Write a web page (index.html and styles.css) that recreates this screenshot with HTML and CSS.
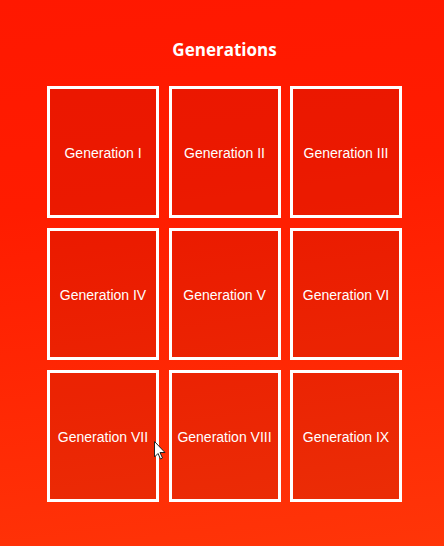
FILE: index.html
```html
<!DOCTYPE html>
<html>
<head>
<meta charset="utf-8">
<link rel="stylesheet" href="styles.css">
</head>
<body>
<main class="page">
  <h1 class="title">Generations</h1>
  <div class="grid">
    <div class="card">Generation I</div>
    <div class="card">Generation II</div>
    <div class="card">Generation III</div>
    <div class="card">Generation IV</div>
    <div class="card">Generation V</div>
    <div class="card">Generation VI</div>
    <div class="card">Generation VII</div>
    <div class="card">Generation VIII</div>
    <div class="card">Generation IX</div>
  </div>
  <svg class="cursor" width="12" height="19" viewBox="0 0 12 19">
    <path d="M0.5 0.5 L0.5 16 L4 12.5 L6.5 18 L8.5 17 L6 11.5 L11 11.5 Z" fill="#fff" stroke="#222" stroke-width="1"/>
  </svg>
</main>
</body>
</html>
```
FILE: styles.css
```css
html, body {
  margin: 0;
  padding: 0;
}
body {
  width: 444px;
  height: 546px;
  overflow: hidden;
  background: linear-gradient(172deg, #ff1800 0%, #ff1c00 35%, #ff3508 100%);
  font-family: "Liberation Sans", Arial, sans-serif;
  color: #fff;
}
.page {
  position: relative;
  box-sizing: border-box;
  height: 546px;
  padding-left: 5px;
  display: flex;
  flex-direction: column;
  align-items: center;
}
.title {
  margin: 38px 0 0;
  height: 48px;
  font-family: "Open Sans", "DejaVu Sans", sans-serif;
  font-weight: 700;
  font-size: 17px;
  line-height: 24px;
}
.grid {
  display: grid;
  grid-template-columns: repeat(3, 112px);
  grid-auto-rows: 132px;
  column-gap: 9.5px;
  row-gap: 10px;
}
.card {
  box-sizing: border-box;
  border: 3px solid #fff;
  background: rgba(60, 0, 0, 0.1);
  display: flex;
  align-items: center;
  justify-content: center;
  font-size: 14px;
  white-space: nowrap;
  padding-top: 2px;
}
.cursor {
  position: absolute;
  left: 154px;
  top: 441px;
}
```
